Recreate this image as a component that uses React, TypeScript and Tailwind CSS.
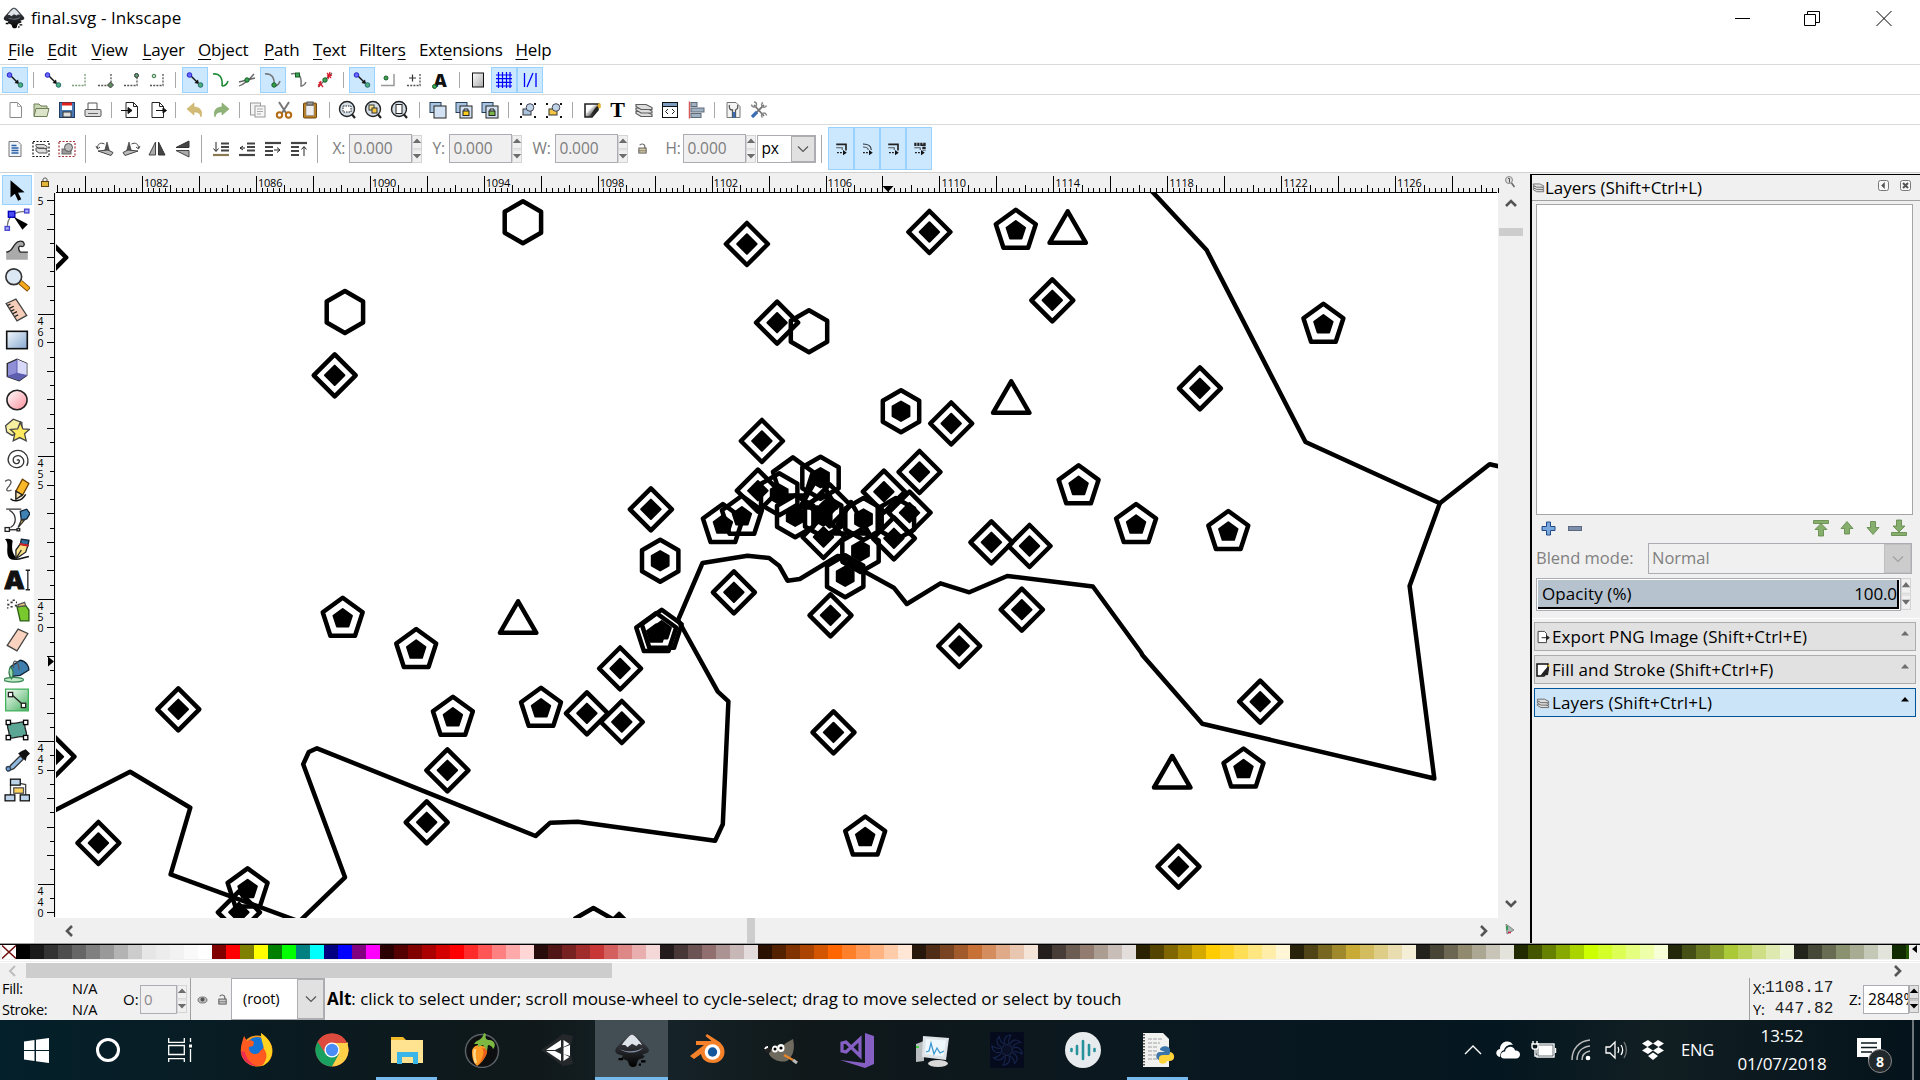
import React from "react";

type Kids = { children?: React.ReactNode };
type Pt = [number, number];

/* ---------- small building blocks ---------- */

const Ic = ({ children, s = 20 }: Kids & { s?: number }) => (
  <svg width={s} height={s} viewBox="0 0 20 20" fill="none" stroke="#333" strokeWidth="1" className="shrink-0">
    {children}
  </svg>
);

const Btn = ({ children, on, tall }: Kids & { on?: boolean; tall?: boolean }) => (
  <div
    className={
      "flex w-[26px] shrink-0 items-center justify-center border " +
      (tall ? "h-[43px] " : "h-[26px] ") +
      (on ? "border-[#99d1ff] bg-[#cce8ff]" : "border-transparent")
    }
  >
    {children}
  </div>
);

const Sep = ({ tall }: { tall?: boolean }) => (
  <div className="flex w-[11.8px] shrink-0 justify-center">
    <div className={"w-px bg-[#a8a8a8] " + (tall ? "h-7" : "h-4")} />
  </div>
);

const Spin = ({ dark, h = 28 }: { dark?: boolean; h?: number }) => (
  <svg width="10" height={h} viewBox="0 0 10 28" preserveAspectRatio="none" className="shrink-0">
    <rect x="0.5" y="0.5" width="9" height="27" fill={dark ? "#e1e1e1" : "#f0f0f0"} stroke={dark ? "#adadad" : "#d4d4d4"} />
    <path d="M0 13.500h10M0 15h10" stroke={dark ? "#adadad" : "#d9d9d9"} />
    <path d="M0.800 8h8.400L5 3.500zM0.800 19h8.400L5 23.500z" fill={dark ? "#000" : "#6d6d6d"} />
  </svg>
);

const Field = ({ children, w }: Kids & { w: string }) => (
  <div className="flex items-center">
    <div className={"flex h-[29px] items-center border border-[#abadb3] bg-[#f0f0f0] pl-[3px] text-[15.5px] tracking-[-0.1px] text-[#7d7d7d] " + w}>
      {children}
    </div>
    <Spin />
  </div>
);

const Chev = ({ d, c = "#555", w = 2.6 }: { d: string; c?: string; w?: number }) => (
  <svg width="12" height="12" viewBox="0 0 12 12" fill="none" stroke={c} strokeWidth={w}>
    <path d={d} />
  </svg>
);

/* ---------- snap bar icons ---------- */

const SnapMain = () => (
  <Ic>
    <path d="M6 6l7 7" stroke="#111" strokeWidth="1.4" />
    <path d="M14 14l-4.500-1 3.500-3.500z" fill="#111" stroke="none" />
    <circle cx="4.500" cy="5" r="2.300" fill="#6a6aff" stroke="#2323c8" />
    <circle cx="15.500" cy="15" r="2.300" fill="#4fae7c" stroke="#1f6f6f" />
  </Ic>
);
const SnapBox = ({ k }: { k: number }) => (
  <Ic>
    <path d="M3 15.500h13V3" stroke={k === 0 ? "#7a9a7a" : "#555"} strokeWidth="1.300" strokeDasharray="2 1.200" />
    {k === 1 && <path d="M15.500 12l3 3-3 3-3-3z" fill="#5e8a62" stroke="#444" />}
    {k === 2 && <circle cx="15.500" cy="5.500" r="2" fill="#5e9e72" />}
    {k === 3 && <circle cx="7" cy="6" r="1.800" fill="#bfe0c2" stroke="#3d7a4c" />}
  </Ic>
);
const Curve = ({ c, dot }: { c: string; dot?: Pt }) => (
  <Ic>
    <path d="M2 4c6-1 10 3 9 12M11 16c3 0 5-2 6-5" stroke={c} strokeWidth="1.600" />
    {dot && <circle cx={dot[0]} cy={dot[1]} r="2.200" fill="#35a04c" stroke="#145c24" />}
  </Ic>
);
const snapBar: React.ReactNode[] = [
  <Btn on><SnapMain /></Btn>, <Sep />,
  <Btn><SnapMain /></Btn>, <Btn><SnapBox k={0} /></Btn>, <Btn><SnapBox k={1} /></Btn>, <Btn><SnapBox k={2} /></Btn>, <Btn><SnapBox k={3} /></Btn>, <Sep />,
  <Btn on><SnapMain /></Btn>,
  <Btn><Curve c="#1d8a35" /></Btn>,
  <Btn><Ic><path d="M2 16C8 14 12 10 17 4M2 12l16-4" stroke="#666" strokeWidth="1.300" /><circle cx="10" cy="10" r="2.200" fill="#3aa655" stroke="#145c24" /></Ic></Btn>,
  <Btn on><Curve c="#777" dot={[11, 15]} /></Btn>,
  <Btn><Ic><path d="M2 4c3-1 6 0 8 1 3 3 2 7 2 11 2 0 4-2 5-4" stroke="#777" strokeWidth="1.500" /><rect x="6.500" y="3" width="4" height="4" fill="#3aa655" stroke="#145c24" /></Ic></Btn>,
  <Btn><Ic><path d="M3 17L17 3" stroke="#666" strokeWidth="1.300" /><path d="M4 12l4 5M3 15l4-1M12 3l4 5M12 6l5-1M4 17l2-6M13 9l2-7" stroke="#d81e2c" strokeWidth="1.300" /><circle cx="10" cy="10" r="2.200" fill="#3aa655" stroke="#145c24" /></Ic></Btn>,
  <Sep />,
  <Btn on><SnapMain /></Btn>,
  <Btn><Ic><path d="M3 15.500h13V4" stroke="#999" strokeWidth="1.500" /><circle cx="8" cy="8" r="2" fill="#3aa655" stroke="#145c24" /></Ic></Btn>,
  <Btn><Ic><path d="M3 15.500h13V4" stroke="#555" strokeWidth="1.300" strokeDasharray="2 1.200" /><path d="M5 8h7M8.500 4.500v7" stroke="#333" strokeWidth="1.200" /></Ic></Btn>,
  <Btn><span className="relative text-[18px] leading-none font-extrabold text-[#111]">A<i className="absolute bottom-0 left-[-2px] size-[5px] rounded-full border border-[#145c24] bg-[#3aa655]" /></span></Btn>,
  <Sep />,
  <Btn><Ic><defs><linearGradient id="pg" x1="0" y1="0" x2="1" y2="1"><stop offset="0" stopColor="#fff" /><stop offset="1" stopColor="#aaa" /></linearGradient></defs><rect x="4.500" y="3" width="11" height="14" fill="url(#pg)" stroke="#111" /></Ic></Btn>,
  <Btn on><Ic><path d="M4.500 2v16M8.500 2v16M12.500 2v16M16 2v16M2 5h16M2 8.700h16M2 12.400h16M2 16h16" stroke="#00f" strokeWidth="1.200" /></Ic></Btn>,
  <Btn on><Ic><path d="M4.500 3v14M16 3v14M7 17L13 3" stroke="#00f" strokeWidth="1.300" /></Ic></Btn>,
];

/* ---------- command bar icons ---------- */

const Page = ({ arrow }: { arrow?: "in" | "out" }) => (
  <Ic>
    <path d="M5 2.500h7.500l4 4v11H5z" fill="#fff" stroke={arrow ? "#222" : "#8a8a8a"} />
    <path d="M12.500 2.500v4h4" stroke={arrow ? "#222" : "#aaa"} />
    {arrow === "in" && <path d="M0 10.500h9M7 7.500l4 3-4 3z" fill="#111" stroke="#111" />}
    {arrow === "out" && <path d="M9 10.500h8M16 8l3.500 2.500-3.500 2.500z" fill="#111" stroke="#111" />}
  </Ic>
);
const Mag = ({ k }: { k: number }) => (
  <Ic>
    <circle cx="9" cy="9" r="7.500" fill="#d5dfe8" stroke="#222" strokeWidth="1.400" />
    <path d="M14 14.500l3 3.500" stroke="#222" strokeWidth="2.200" />
    {k === 0 && <rect x="5" y="6" width="8" height="6" fill="#fff" stroke="#222" strokeDasharray="1.500 1" />}
    {k === 1 && <><rect x="5" y="5" width="5" height="5" fill="#ffe68a" stroke="#333" /><rect x="8" y="8" width="5" height="5" fill="#f5c542" stroke="#333" /></>}
    {k === 2 && <rect x="6" y="4.500" width="6" height="9" fill="#fff" stroke="#222" />}
  </Ic>
);
const Dup = ({ k }: { k: number }) => (
  <Ic>
    <rect x="2" y="2.500" width="11" height="10" fill="#a8c4e0" stroke="#27405c" />
    <rect x="6" y="6" width="12" height="12" fill="#d3e2f2" stroke="#222" />
    {k > 0 && <><rect x="9" y="11" width="6" height="4.500" fill={k === 1 ? "#ffce1f" : "#7bb54a"} stroke="#222" /><path d="M10 11V9h4v2" stroke="#222" /></>}
  </Ic>
);
const Grp = ({ lock }: { lock?: boolean }) => (
  <Ic>
    <path d="M2 4h2M16 4h2M2 17h2M16 17h2M3 3v2M17 3v2M3 16v2M17 16v2" stroke="#111" strokeWidth="2" />
    <rect x="5" y="9" width="8" height="6" fill={lock ? "#f5c542" : "#a9c4de"} stroke="#333" />
    <circle cx="12" cy="7.500" r="3.800" fill="#bfd3e6" stroke="#445" />
  </Ic>
);
const Brush = () => (
  <Ic>
    <defs><linearGradient id="fs" x1="0" y1="0" x2="1" y2="1"><stop offset="0.350" stopColor="#fff" /><stop offset="0.800" stopColor="#222" /></linearGradient></defs>
    <path d="M3 4h13v6l-6 7H3z" fill="url(#fs)" stroke="#222" strokeWidth="1.600" />
    <path d="M17.500 3l-5 6-5 8 6-5 5-7z" fill="#222" stroke="none" />
    <path d="M15 5.500l3-3 1 5-2 1z" fill="#eab52c" stroke="none" />
  </Ic>
);
const LayersIc = ({ s }: { s?: number }) => (
  <Ic s={s}>
    {[11, 7.5, 4].map((y) => (
      <path key={y} d={`M2 ${y + 0.5}h10l6 3v2H7l-5-3z`} fill="#dedede" stroke="#5c5c5c" strokeWidth="1.200" />
    ))}
  </Ic>
);
const Undo = ({ flip, c }: { flip?: boolean; c: string }) => (
  <Ic>
    <g transform={flip ? "translate(20 0) scale(-1 1)" : undefined}>
      <path d="M2 9l7-6v4c6 0 9 4 7 10-1-4-3-5-7-5v3z" fill={c} stroke={c} strokeOpacity=".5" fillOpacity=".75" />
    </g>
  </Ic>
);
const cmdBar: React.ReactNode[] = [
  <Btn><Page /></Btn>,
  <Btn><Ic><path d="M3 16V4h5l2 2h6v3" fill="#c9d6b4" stroke="#6d7d55" /><path d="M3 16.500l2-8h13l-2 8z" fill="#dbe4c8" stroke="#6d7d55" /></Ic></Btn>,
  <Btn><Ic><rect x="2.500" y="2.500" width="15" height="15" fill="#4a78b0" stroke="#1e3c66" /><rect x="5" y="3" width="10" height="7" fill="#fff" stroke="none" /><rect x="5" y="2.500" width="10" height="3" fill="#e0201b" stroke="none" /><rect x="6" y="12" width="8" height="5" fill="#ddd" stroke="#333" /></Ic></Btn>,
  <Btn><Ic><path d="M5 9V3h9v6" fill="#fff" stroke="#555" /><rect x="2" y="9.500" width="16" height="7" rx="1" fill="#ddd" stroke="#555" /><path d="M5 13.500h10" stroke="#666" /></Ic></Btn>,
  <Sep />, <Btn><Page arrow="in" /></Btn>, <Btn><Page arrow="out" /></Btn>, <Sep />,
  <Btn><Undo c="#c2a44a" /></Btn>, <Btn><Undo flip c="#6b9a4c" /></Btn>, <Sep />,
  <Btn><Ic><rect x="2.500" y="3" width="10" height="12" fill="#f4f4f4" stroke="#999" /><rect x="7" y="6" width="10" height="11" fill="#f6f6f6" stroke="#999" /><path d="M9 9h6M9 11.500h6M9 14h4" stroke="#aaa" /></Ic></Btn>,
  <Btn><Ic><path d="M5 2l7 11M15 2L8 13" stroke="#777" strokeWidth="2" /><circle cx="5.500" cy="15" r="2.700" stroke="#b36b12" strokeWidth="2" /><circle cx="14.500" cy="15" r="2.700" stroke="#b36b12" strokeWidth="2" /></Ic></Btn>,
  <Btn><Ic><rect x="3.500" y="3" width="13" height="15" rx="1" fill="#b97f22" stroke="#6b4510" /><rect x="6" y="5.500" width="8" height="10" fill="#eee" stroke="#888" strokeWidth=".6" /><rect x="7" y="2" width="6" height="3" fill="#999" stroke="#555" /></Ic></Btn>,
  <Sep />, <Btn><Mag k={0} /></Btn>, <Btn><Mag k={1} /></Btn>, <Btn><Mag k={2} /></Btn>, <Sep />,
  <Btn><Dup k={0} /></Btn>, <Btn><Dup k={1} /></Btn>, <Btn><Dup k={2} /></Btn>, <Sep />,
  <Btn><Grp /></Btn>, <Btn><Grp lock /></Btn>, <Sep />,
  <Btn><Brush /></Btn>,
  <Btn><span className="font-['Liberation_Serif'] text-[22px] leading-none font-bold text-black">T</span></Btn>,
  <Btn><LayersIc /></Btn>,
  <Btn><Ic><rect x="2.500" y="2.500" width="15" height="15" fill="#fff" stroke="#111" /><path d="M3 4.500h14" stroke="#7d9cc0" strokeWidth="3" /><path d="M2.500 6.500h15" stroke="#111" /><path d="M8 9l-2.500 2.500L8 14M12 9l2.500 2.500L12 14" stroke="#222" /></Ic></Btn>,
  <Btn><Ic><path d="M3.500 1.500v17" stroke="#d65a5a" strokeWidth="1.500" /><rect x="5" y="2.500" width="6" height="4" fill="#9fb1c2" stroke="#5d6b78" /><rect x="5" y="8" width="13" height="4" fill="#9fb1c2" stroke="#5d6b78" /><rect x="5" y="13.500" width="10" height="4" fill="#9fb1c2" stroke="#5d6b78" /></Ic></Btn>,
  <Sep />,
  <Btn><Ic><path d="M4 2.500h9l4 4v11H4z" fill="#f4f4f4" stroke="#777" /><path d="M6.500 5c-1 4 1 5 3 5v7h3v-7c2-1 3-2 2-5" stroke="#555" strokeWidth="1.300" /><path d="M11 12v6" stroke="#3c6eb4" strokeWidth="2.500" /></Ic></Btn>,
  <Btn><Ic><path d="M5 5l10 11M15 5L4 16" stroke="#777" strokeWidth="1.800" /><path d="M2.500 4.500A2.500 2.500 0 1 0 5 2M14 2.500a2.500 2.500 0 1 0 3.500 3M13.500 17.500a2.500 2.500 0 1 1 4-2" stroke="#888" strokeWidth="1.400" /><path d="M3 17l5-5" stroke="#3c6eb4" strokeWidth="3.200" /></Ic></Btn>,
];

/* ---------- tool-control icons ---------- */

const Rot = ({ flip }: { flip?: boolean }) => (
  <Ic>
    <g transform={flip ? "translate(20 0) scale(-1 1)" : undefined}>
      <path d="M9 14l3-11 3 11z" fill="#555" stroke="#333" strokeWidth=".6" />
      <path d="M3 12l13 4.500 2-3-5-2.500z" fill="#bbb" stroke="#444" />
      <path d="M2.500 9c0-4 3-6 7-4M1 7l1.500 3L5 8" stroke="#444" />
    </g>
  </Ic>
);
const FlipIc = ({ v }: { v?: boolean }) => (
  <Ic>
    <g transform={v ? "rotate(-90 10 10)" : undefined}>
      <path d="M8.500 3v13H2z" fill="#aaa" stroke="#444" />
      <path d="M11.500 3v13H18z" fill="#444" stroke="#333" />
    </g>
  </Ic>
);
const Ord = ({ k }: { k: number }) => (
  <Ic>
    {k < 2 ? (
      <>
        <path d="M10 4.500h8M10 8h8M10 11.500h8" stroke="#444" strokeWidth="2.200" />
        <path d="M2 16h16" stroke={k ? "#444" : "#8a7a52"} strokeWidth="2.200" />
        <path d={k ? "M3 9h5M6 7L3 9l3 2" : "M5 3v9M2.500 9.500L5 12.500 7.500 9.500"} stroke="#222" />
      </>
    ) : (
      <>
        <path d="M2 4h16" stroke="#444" strokeWidth="2.200" />
        <path d="M2 8h8M2 12h8M2 16h8" stroke="#444" strokeWidth="2.200" />
        <path d={k === 2 ? "M11 11h6M14 8.500l3 2.500-3 2.500" : "M15 17V8M12.500 10.500L15 7.500l2.500 3"} stroke="#222" />
      </>
    )}
  </Ic>
);
const Aff = ({ k }: { k: number }) => (
  <Ic s={15}>
    <path d={k === 1 ? "M4 4c7 0 11 2 11 8" : "M3 4.500h13v8"} stroke="#222" strokeWidth={k === 3 ? 4.5 : k === 1 ? 1.4 : 2.2} strokeDasharray={k === 3 ? "3 1" : undefined} />
    <path d={k === 1 ? "M4 8c4 0 7 1 7 4" : "M3 9h8v3"} stroke="#555" strokeWidth="1.400" />
    <path d="M4 15.500h9" stroke="#222" strokeWidth="1.400" strokeDasharray="2.500 1.500" />
    <path d="M12 12l5 3.500-5 3.500z" fill="#111" stroke="none" />
  </Ic>
);
const ctlIcons: React.ReactNode[] = [
  <Btn><Ic><path d="M4 2.500h9l3 3v12H4z" fill="#eef3f9" stroke="#777" /><path d="M6.500 6.500h5M6.500 9h7M6.500 11.500h7M6.500 14h7" stroke="#2a5fa8" strokeWidth="1.300" /></Ic></Btn>,
  <Btn><Ic><rect x="2" y="2.500" width="16" height="15" stroke="#111" strokeWidth="1.200" strokeDasharray="2 1.500" /><path d="M5 5.500h8l3 2v2H8l-3-2zM5 9h8l3 2v3H8l-3-2z" fill="#ddd" stroke="#555" /></Ic></Btn>,
  <Btn><Ic><rect x="2" y="2.500" width="16" height="15" stroke="#a3323b" strokeWidth="1.200" strokeDasharray="2 1.500" /><rect x="5" y="10" width="9" height="5" fill="#999" stroke="#666" /><circle cx="11.500" cy="8.500" r="4" fill="#bbb" stroke="#555" /></Ic></Btn>,
  <Sep tall />, <Btn><Rot /></Btn>, <Btn><Rot flip /></Btn>, <Btn><FlipIc /></Btn>, <Btn><FlipIc v /></Btn>, <Sep tall />,
  <Btn><Ord k={0} /></Btn>, <Btn><Ord k={1} /></Btn>, <Btn><Ord k={2} /></Btn>, <Btn><Ord k={3} /></Btn>, <Sep tall />,
];

const Pad = ({ c = "#e3b63a", s = 12 }: { c?: string; s?: number }) => (
  <svg width={s} height={s} viewBox="0 0 12 12">
    <path d="M3 2.500c1-2 5-2 5.500 1V6" fill="none" stroke="#666" strokeWidth="1.300" />
    <rect x="2" y="5.500" width="8" height="5.500" fill={c} stroke="#555" />
    <path d="M2 8.500h8" stroke="#555" strokeWidth=".7" />
  </svg>
);

/* ---------- toolbox ---------- */

const T = ({ children }: Kids) => (
  <svg width="26" height="26" viewBox="0 0 24 24" fill="none" stroke="#222" strokeWidth="1.200">{children}</svg>
);
const tools: React.ReactNode[] = [
  <T><path d="M6 3l13 11-6 .5 3 6-3 1.500-3-6.500L6 19z" fill="#000" stroke="none" /></T>,
  <T><path d="M3 20C3 9 8 4 21 4" stroke="#777" /><rect x="4" y="4" width="6" height="5.500" fill="#4a4af0" stroke="#00b" /><rect x="19" y="2" width="4" height="3.500" fill="#aaf" stroke="#44c" /><rect x="1" y="18" width="4" height="3.500" fill="#aaf" stroke="#44c" /><path d="M9 9l13 7-5 5z" fill="#000" stroke="none" /></T>,
  <T><path d="M2 21v-7c7 0 6-9 12-10 5 0 6 4 3 5-3-2-5 1-2 5h7v7z" fill="#aaa" stroke="none" /><path d="M2 14c7 0 6-9 12-10 5-1 6 4 3 5M17 9c-3-2-5 1-2 5h7" /></T>,
  <T><path d="M15 14l8 7" stroke="#7a4a00" strokeWidth="5" /><path d="M15 14l7.500 6.500" stroke="#f7a91c" strokeWidth="3.400" /><circle cx="9" cy="9" r="7.300" fill="#dce8f4" stroke="#333" strokeWidth="1.500" /></T>,
  <T><path d="M2 6l9-4 10 15-9 5z" fill="#f5cdb8" stroke="#444" /><path d="M3 8l3-1.500M5 10.500l4-2M6.500 13l3-1.500M8 15.500l4-2M10 18l3-1.500" /></T>,
  <T><defs><linearGradient id="tb" x1="0" y1="0" x2="1" y2="1"><stop offset="0" stopColor="#f4f8fc" /><stop offset="1" stopColor="#86a9d0" /></linearGradient></defs><rect x="2.500" y="4" width="19" height="16" fill="url(#tb)" stroke="#111" strokeWidth="1.500" /></T>,
  <T><path d="M3 6l9-4 9 4v11l-7 5-11-4z" fill="#8f8fd8" stroke="#222" /><path d="M12 2l9 4v11l-9-2z" fill="#d8d8f8" stroke="none" /><path d="M3 18l9-3 9 2-7 5z" fill="#5f5fb0" stroke="none" /><path d="M12 2v13l-9 3M12 15l9 2" stroke="#55a" strokeWidth=".8" /></T>,
  <T><defs><linearGradient id="te" x1="0" y1="0" x2="1" y2="1"><stop offset="0" stopColor="#fff" /><stop offset="1" stopColor="#ff8f9c" /></linearGradient></defs><ellipse cx="12" cy="12" rx="9.300" ry="9" fill="url(#te)" stroke="#222" strokeWidth="1.400" /></T>,
  <T><path d="M1.500 8l7-6 8 3 0 8-9 4-5-3z" fill="#f7f0a0" stroke="#444" /><path d="M15 5l2.500 6 6 .5-4.500 4 1.500 6.500-6-3-6 3 1.500-6.500-4-4 6.500-.5z" fill="#ffe95e" stroke="#444" /></T>,
  <T><path d="M12 12.500c.5-1.500 3-.5 2 1.500-1.500 2.500-5.500 1.500-5.500-2 0-4 5.500-5.500 8.500-2 3 4 0 9.500-5.500 9C5 18.500 2.500 13 4.500 8.500 7 3 14 1.500 18.500 5c4 3 4.500 8.500 2.500 12.500" stroke="#333" strokeWidth="1.200" /></T>,
  <T><path d="M1 4c5-3 7 0 4 4-4 4-3 6 2 4" stroke="#555" /><path d="M6 20c3 3 10 3 14-4" stroke="#111" strokeWidth="1.300" /><path d="M11 13l6-11 6 4-6 11-6 3z" fill="#fbb829" stroke="#6b4300" /><path d="M11 13l6 3.500-6 4z" fill="#fbe3b0" stroke="#222" /></T>,
  <T><path d="M2 2h14M5 3c7 4 7 12 1 16" stroke="#333" /><rect x="1" y="19" width="4" height="3.500" fill="#fff" /><path d="M5 21h8" /><rect x="12" y="20" width="2.500" height="2" fill="#fff" /><path d="M15 4l6-2 3 4-3 5-5 1z" fill="#3f82b4" stroke="#123" /><path d="M16 12l-3 7 6-7z" fill="#fbc040" stroke="#333" /></T>,
  <T><path d="M1 2c3-1 7 0 7 2-1 5-1 11 4 16-6 3-9-1-9-7 0-4 1-8-2-11z" fill="#000" stroke="none" /><path d="M9 20c4 2 7-1 14-2" stroke="#111" strokeWidth="1.600" /><path d="M16 2l7 1-1 5-7-1z" fill="#2f6ca0" stroke="#123" /><path d="M15 6.500l7 1.500-2 6-9 6 0-8z" fill="#fbe08a" stroke="#222" /><path d="M14.500 6.500l8 1.500" stroke="#c22" strokeWidth="2" /><path d="M11 20l5-8" /></T>,
  <T><path d="M20 3h4M22 3v18M20 21h4" stroke="#222" /><text x="0.500" y="20" fontSize="22" fontWeight="800" fill="#111" stroke="#111" strokeWidth=".8" fontFamily="Open Sans" textLength="18" lengthAdjust="spacingAndGlyphs">A</text></T>,
  <T><path d="M3 3h1M6 5h2M3 7h2M8 3h2M11 5h1M6 9h2M10 8h2M3 10h1" stroke="#333" strokeWidth="1.600" /><path d="M12 9l8-1 3 4v10h-8z" fill="#79c82e" stroke="#2a5a10" /><path d="M13 7l6-2 1 3-7 1z" fill="#f2cf7a" stroke="#555" /></T>,
  <T><path d="M3 17L13 2l9 4-10 16z" fill="#f9d3bf" stroke="#444" /></T>,
  <T><ellipse cx="9" cy="21" rx="9" ry="2.200" fill="#bfe8c4" stroke="#3b8a57" /><path d="M6 9l9-6c6 1 8 6 8 9l-8 5-9 1z" fill="#3f7fae" stroke="#123" /><path d="M6 9c-2 3-2 8 1 11 2-3 2-8-1-11z" fill="#9ed8ae" stroke="#2f7a4a" /><path d="M9 10c-2-8 4-9 5 2" stroke="#555" /></T>,
  <T><defs><linearGradient id="tg" x1="0" y1="0" x2="1" y2="1"><stop offset="0" stopColor="#fff" /><stop offset="1" stopColor="#43b05c" /></linearGradient></defs><rect x="1.500" y="2" width="21" height="20" fill="url(#tg)" stroke="#43b05c" /><path d="M7 7l10 9" stroke="#222" /><rect x="4" y="5" width="4" height="4" fill="#fff" /><rect x="16" y="15" width="4" height="4" fill="#fff" /></T>,
  <T><path d="M4 5c6 3 12-2 16 0-3 5 3 9 0 14-6-3-11 2-16 0 3-5-3-9 0-14z" fill="#5ba695" stroke="#222" />{([[2, 3], [18, 3], [2, 17], [18, 17]] as Pt[]).map(([x, y], i) => <rect key={i} x={x} y={y} width="4" height="4" fill="#fff" stroke="#000" />)}</T>,
  <T><path d="M15 8l-9 9-2 5 5-2 9-9z" fill="#8fb8e0" stroke="#333" /><path d="M13 6l7 7 1-4 3-3-4-4-4 2z" fill="#111" stroke="none" /><circle cx="4" cy="20" r="2" fill="#6aa0d8" stroke="#345" /></T>,
  <T><path d="M6 7v10M10 5l10 2v10" stroke="#444" /><rect x="6" y="2" width="9" height="5.500" fill="#bcd3ea" stroke="#111" /><rect x="9" y="10" width="9" height="5" fill="#ffd35c" stroke="#555" /><rect x="1" y="16.500" width="9" height="5.500" fill="#bcd3ea" stroke="#111" /><rect x="15" y="16.500" width="8.500" height="5.500" fill="#bcd3ea" stroke="#111" /></T>,
];

/* ---------- rulers ---------- */

const UNIT = 28.48;

const HRuler = () => {
  const ticks: React.ReactNode[] = [];
  for (let i = -20; i <= 240; i++) {
    const x = Math.round(142 + (i * UNIT) / 5 - 34);
    if (x < 22 || x > 1464) continue;
    const y = i % 10 === 0 ? 3 : i % 5 === 0 ? 12 : 15;
    ticks.push(<path key={i} d={`M${x + 0.5} ${y}V20`} />);
  }
  return (
    <svg width="1465" height="20" className="block">
      <g stroke="#000">{ticks}<path d="M22 19.500H1463" strokeWidth="1" /></g>
      <g fill="#000" fontSize="11" letterSpacing="-0.200">
        {Array.from({ length: 12 }, (_, i) => (
          <text key={i} x={110 + i * 4 * UNIT} y="14">{1082 + i * 4}</text>
        ))}
      </g>
      <path d="M848.500 13h11l-5.500 6z" />
      <g transform="translate(6 4)"><rect x="1.500" y="4.500" width="7" height="5" fill="#e3b63a" stroke="#5a4310" /><path d="M3 4.500V2.500c0-2 4-2 4 0v2" fill="none" stroke="#444" /></g>
    </svg>
  );
};

const VRuler = () => {
  const ticks: React.ReactNode[] = [];
  for (let i = -8; i <= 42; i++) {
    const y = Math.round(314 + (i * UNIT) / 2 - 193);
    if (y < 4 || y > 722) continue;
    const x = i % 10 === 0 ? 4 : i % 2 === 0 ? 13 : 16;
    ticks.push(<path key={i} d={`M${x} ${y + 0.5}H20`} />);
  }
  return (
    <svg width="22" height="725" className="block shrink-0">
      <g stroke="#000">{ticks}<path d="M20.500 0V724" /></g>
      <g fill="#000" fontSize="10.500">
        {[465, 460, 455, 450, 445, 440].map((v, i) =>
          String(v).split("").map((ch, j) => {
            const y = -10.5 + i * 5 * UNIT + j * 11;
            return y > 4 ? <text key={i + "-" + j} x="3.500" y={y}>{ch}</text> : null;
          })
        )}
      </g>
      <path d="M14 463.500v10l6-5z" />
    </svg>
  );
};

/* ---------- drawing ---------- */

const poly = (n: number, r: number) =>
  Array.from({ length: n }, (_, i) => {
    const a = -Math.PI / 2 + (i * 2 * Math.PI) / n;
    return `${(r * Math.cos(a)).toFixed(2)},${(r * Math.sin(a)).toFixed(2)}`;
  }).join(" ");

const Marks = ({ n, at, dot }: { n: number; at: Pt[]; dot?: boolean }) => (
  <>
    {at.map(([x, y], i) => (
      <g key={i} transform={`translate(${x + 0.4} ${y})`}>
        <polygon points={poly(n, 21)} />
        {dot && <polygon points={poly(n, 9.7)} fill="#000" strokeWidth="2" />}
      </g>
    ))}
  </>
);

const diamonds: Pt[] = [
  [746.7, 244], [929.2, 232], [776.9, 322.7], [334.5, 375.3], [761.7, 441], [1052.1, 300.3], [1199.7, 388.3], [951, 423.5],
  [991.2, 542.3], [1029.3, 546], [1021.6, 609.7], [959, 646], [1260, 701.7], [178.1, 709.3], [53.2, 756.7], [98.2, 843],
  [619.9, 668.5], [586.7, 713.3], [621.6, 722], [447.2, 770.3], [426.5, 822.3], [238.7, 912.3], [733.7, 592.3], [618.9, 935],
  [45, 257.5], [650.7, 509.3], [757.7, 490.7], [919.3, 472], [883.7, 491.7], [909.3, 512.7], [893.7, 538.3], [823.3, 537],
  [830.3, 615.3], [829.5, 505.3], [833.3, 732.4], [1178.3, 866.6],
];
const hexDots: Pt[] = [[900.8, 411.3], [660, 560.7], [820.3, 477.7], [779, 494.3], [795, 516.3], [863.3, 519], [860.3, 551], [845, 576.3], [823, 516]];
const hexes: Pt[] = [[522.7, 222.3], [344.7, 312], [808.8, 331.3], [895.7, 519], [593.2, 929]];
const pentDots: Pt[] = [
  [1015.6, 230.7], [1323.2, 324.7], [1078.4, 486.3], [1135.9, 525], [1228.1, 532], [342.5, 618.7], [416, 650], [452.7, 717.7],
  [540.8, 708.7], [247.4, 889.4], [661.5, 630.7], [656, 634], [722.7, 525], [741.7, 516.7], [865, 837.5], [1243.3, 769.5],
];
const pents: Pt[] = [[792.7, 478.4]];
const tris: Pt[] = [[1067.5, 232.3], [1011, 402.3], [517.9, 622.3], [1172, 777], [850.7, 523], [818, 497]];

const Canvas = () => (
  <svg width="1442" height="725" viewBox="56.200 193 1442 725" className="block shrink-0 bg-white">
    <g fill="none" stroke="#000" strokeWidth="4.500" strokeLinejoin="round">
      <Marks n={4} at={diamonds} dot />
      <Marks n={6} at={hexDots} dot />
      <Marks n={6} at={hexes} />
      <Marks n={5} at={pentDots} dot />
      <Marks n={5} at={pents} />
      <Marks n={3} at={tris} />
      <path d="M1150 189L1206.800 250 1305.700 442 1440 503.300 1489.800 464.300 1502 467" />
      <path d="M1440 503.300L1409.800 586 1434.500 778.500 1202.500 723.700 1142.500 655 1141.300 652.500 1093.100 586.500 1007.500 576 969.500 592.300 940.700 583.300 907 604 894 587.700 866.700 572.700 846.700 556.700 838 556 800 579 787.700 580.700 779.300 565.700 769.300 558 747.700 555.700 702.700 563 678.300 620 718 691.700 728.600 701.300 723 824.300 715.300 840.700 578 821.700 550.500 822.700 535.800 836 317.200 748.300 309 752 303.400 764.300 345.200 877.300 300 921" />
      <path d="M50 813L130.300 771.700 190.500 807.700 170.800 874.300 298 921" />
      <path d="M843 560L864 571" strokeWidth="8" />
    </g>
  </svg>
);

/* ---------- palette ---------- */

const swatches = (
  "000000 1a1a1a 333333 4d4d4d 666666 808080 999999 b3b3b3 cccccc e6e6e6 ececec f2f2f2 f9f9f9 ffffff " +
  "800000 ff0000 808000 ffff00 008000 00ff00 008080 00ffff 000080 0000ff 800080 ff00ff " +
  "2b0000 550000 800000 aa0000 d40000 ff0000 ff2a2a ff5555 ff8080 ffaaaa ffd5d5 " +
  "280b0b 501616 782121 a02c2c c83737 d35f5f de8787 e9afaf f4d7d7 241c1c 483737 6c5353 916f6f ac9393 c8b7b7 e3dbdb " +
  "2b1100 552200 803300 aa4400 d45500 ff6600 ff7f2a ff9955 ffb380 ffccaa ffe6d5 " +
  "28170b 502d16 784421 a05a2c c87137 d38d5f deaa87 e9c6af f4e3d7 241f1c 483e37 6c5d53 917c6f ac9d93 c8beb7 e3dedb " +
  "2b2200 554400 806600 aa8800 d4aa00 ffcc00 ffd42a ffdd55 ffe680 ffeeaa fff6d5 " +
  "28220b 504416 786721 a0892c c8ab37 d3bc5f decd87 e9ddaf f4eed7 24221c 484537 6c6753 918a6f aca793 c8c4b7 e3e2db " +
  "222b00 445500 668000 88aa00 aad400 ccff00 d4ff2a ddff55 e5ff80 eeffaa f6ffd5 " +
  "23280b 445016 677821 89a02c abc837 bcd35f cdde87 dde9af eef4d7 22241c 454837 676c53 8a916f a7ac93 c4c8b7 e2e3db 112b00 225500"
).split(" ");

const Palette = () => (
  <div className="h-5 shrink-0 border-t border-[#a0a0a0] bg-[#f0f0f0]">
    <div className="flex h-[15px] border-t border-black">
      <div className="flex w-[1909px] shrink-0 overflow-hidden pl-[2px]">
        <svg width="14" height="14" viewBox="0 0 14 14" className="shrink-0 bg-white"><path d="M0 0.500l14 13M14 0.500L0 13.500" stroke="#701010" strokeWidth="1.500" /></svg>
        {swatches.map((c, i) => (
          <div key={i} className="h-full w-[14px] shrink-0" style={{ backgroundColor: "#" + c }} />
        ))}
      </div>
      <svg width="5" height="8" className="ml-[3px]"><path d="M5 0v8L0 4z" /></svg>
    </div>
    <div className="mt-px h-px bg-white" />
    <div className="mt-px h-px bg-white" />
  </div>
);

/* ---------- dock ---------- */

const dockArrow = (d: string) => (
  <svg width="18" height="18" viewBox="0 0 18 18"><path d={d} fill="#86ae6c" stroke="#5c8442" strokeWidth=".8" /></svg>
);

const DockBar = ({ icon, label, on }: { icon: React.ReactNode; label: string; on?: boolean }) => (
  <div className={"mb-1 flex h-[29px] items-center border pl-px text-[17px] " + (on ? "border-[#005499] bg-[#cce4f7]" : "border-[#adadad] bg-[#e1e1e1]")}>
    {icon}
    <span className="flex-1 pl-[2px] leading-none tracking-[0.1px]">{label}</span>
    <svg width="8" height="5" className="mr-[6px] mb-[6px]"><path d="M0 4.500h8L4 0z" fill={on ? "#000" : "#6d6d6d"} /></svg>
  </div>
);

const Dock = () => (
  <div className="mt-px flex w-[390px] shrink-0 flex-col border-t border-l-2 border-black">
    <div className="flex h-[26px] items-center border-b border-[#a0a0a0] text-[17px]">
      <LayersIc s={13} />
      <span className="flex-1 tracking-[-0.05px]">Layers (Shift+Ctrl+L)</span>
      <div className="mr-[9px] mb-1 flex gap-[11px]">
        {["M6.500 2.500v6L3.500 5.500z", "M3 3l5 5M8 3l-5 5"].map((d, i) => (
          <svg key={i} width="11" height="11"><rect x=".5" y=".5" width="10" height="10" rx="2" fill="#f8f8f8" stroke="#777" /><path d={d} fill="#555" stroke="#555" strokeWidth={i ? 2 : 0.5} /></svg>
        ))}
      </div>
    </div>
    <div className="mx-1 mr-[7px] mt-[3px] h-[311px] border border-[#a5a5a5] bg-white" />
    <div className="flex h-[27px] items-center pr-[12px] pb-px pl-[9px]">
      <svg width="15" height="15"><path d="M5.500 1h4v4.500H14v4H9.500V14h-4V9.500H1v-4h4.500z" fill="#7aa7dc" stroke="#204a87" /></svg>
      <svg width="14" height="5" className="ml-3"><rect x=".5" y=".5" width="13" height="4" fill="#7c8ea8" stroke="#5a6a82" /></svg>
      <div className="flex flex-1 justify-end gap-[8px]">
        {dockArrow("M1.500 1.500h15v3h-15zM9 4.500l6 6h-3.500V17h-5v-6.500H3z")}
        {dockArrow("M9 2.500l6 7h-3.500V15h-5V9.500H3z")}
        {dockArrow("M9 15.500l6-7h-3.500V2.500h-5v6H3z")}
        {dockArrow("M1.500 16.500h15v-3h-15zM9 13l6-6h-3.500V1h-5v6H3z")}
      </div>
    </div>
    <div className="mt-px flex h-[31px] items-center pl-1 text-[16.5px] text-[#808080]">
      <span className="w-[112px]">Blend mode:</span>
      <div className="flex h-full w-[264px] items-center border border-[#abadb3] pl-[3px]">
        <span className="flex-1">Normal</span>
        <div className="flex h-full w-[27px] items-center justify-center border border-[#bfbfbf] bg-[#ccc]"><Chev d="M1 3.500l5 5 5-5" c="#a0a0a0" w={1.2} /></div>
      </div>
    </div>
    <div className="mt-[4px] flex h-[33px] pl-1">
      <div className="w-[365px] border border-[#abadb3] bg-white p-px">
        <div className="flex h-full items-center justify-between border-r-2 border-b-2 border-black bg-[#b6c3ce] pl-[4px] text-[17px] tracking-[0.1px]">
          <span>Opacity (%)</span>
          <span className="tracking-[-0.1px]">100.0</span>
        </div>
      </div>
      <Spin h={32} />
    </div>
    <div className="mt-[7px] h-px bg-white" />
    <div className="mt-[3px] flex flex-col pr-[4px] pl-[2px]">
      <DockBar icon={<Ic s={14}><path d="M3 2h9l3 3v13H3z" fill="#fff" stroke="#444" strokeWidth="1.400" /><path d="M8 11h9M15 8l4 3-4 3z" fill="#222" stroke="#222" strokeWidth="1.400" /></Ic>} label="Export PNG Image (Shift+Ctrl+E)" />
      <DockBar icon={<div className="flex w-[14px] justify-center"><svg width="14" height="14" viewBox="0 0 14 14"><path d="M1 1h11v5l-4 7H1z" fill="#fff" stroke="#111" strokeWidth="1.500" /><path d="M13 2L8 8l-4 5 8-1 1-6z" fill="#222" /><path d="M11 3l2.500-2v3z" fill="#eab52c" /></svg></div>} label="Fill and Stroke (Shift+Ctrl+F)" />
      <DockBar icon={<LayersIc s={14} />} label="Layers (Shift+Ctrl+L)" on />
    </div>
  </div>
);

/* ---------- taskbar ---------- */

const InkLogo = ({ s }: { s: number }) => (
  <svg width={s} height={s} viewBox="0 0 32 32">
    <defs><linearGradient id="ink" x1="0" y1="0" x2="0" y2="1"><stop offset="0" stopColor="#4b4f57" /><stop offset="1" stopColor="#000" /></linearGradient></defs>
    <path d="M16 1c2 0 3 1 4 2l10 11c3 4-1 5-5 6 2 1 3 2 1 3-3 1-4 1-5 3s0 5-4 5c-5 0-3-5-6-6-4-1-5-2-3-4-4-1-9-2-6-7L12 3c1-1 2-2 4-2z" fill="url(#ink)" />
    <path d="M16 2.500c2 0 7 6 9 9l-3-1-2 2-4-2-4 3-2-2-3 0c2-3 7-9 9-9z" fill="#dfe4ea" />
    <path d="M5 15c6 3 14 3 21-1-4 5-14 6-21 1z" fill="#7f8da0" />
    <path d="M4 24h4M24 26h4M22 29h2" stroke="#000" strokeWidth="2" />
  </svg>
);

const Task = ({ children, on, under }: Kids & { on?: boolean; under?: boolean }) => (
  <div className="relative flex h-full w-[75.1px] shrink-0 items-center justify-center">
    {on && <div className="absolute inset-y-0 left-[1px] w-[73px] bg-[#434d54]" />}
    <div className="relative">{children}</div>
    {(on || under) && <div className={"absolute bottom-0 h-[3px] bg-[#76b9ed] " + (on ? "left-[1px] w-[73px]" : "left-[7px] w-[61px]")} />}
  </div>
);

const A = ({ children }: Kids) => <svg width="36" height="36" viewBox="0 0 36 36">{children}</svg>;

const apps: { k: React.ReactNode; on?: boolean; under?: boolean }[] = [
  { k: <A><circle cx="18" cy="19" r="15.500" fill="#ff9a1a" /><circle cx="18" cy="16" r="11" fill="#1373d6" /><path d="M22 1c5 4 12 9 11 20-1 8-8 13-15 13S3 29 2 21C1 14 4 8 5 4l3 5c2-1 5-1 7 1l-1 4-4 1c-1 3 2 7 6 7 3 0 5-2 5-3 5-3 6-8 1-18z" fill="#ff5a1f" /><path d="M22 1c7 5 12 11 11 20-1 7-5 11-10 13 5-6 6-12 2-17-1-6-3-8-3-16z" fill="#ffd21f" /><path d="M2 19c1 9 8 15 16 15-6-2-11-7-12-14z" fill="#ee2b55" /></A> },
  { k: <A><circle cx="18" cy="18" r="16.500" fill="#dd4b3e" /><path d="M18 18L3.700 9.700A16.500 16.500 0 0 0 18 34.500l7-12z" fill="#1aa15f" /><path d="M18 18h15.500l.5-7.500H18zM18 34.500A16.500 16.500 0 0 0 33 11H18l7 11z" fill="#ffcf48" /><path d="M3.700 9.700A16.500 16.500 0 0 1 33 11H18L11 21z" fill="#dd4b3e" /><circle cx="18" cy="18" r="7.600" fill="#fff" /><circle cx="18" cy="18" r="6.200" fill="#4a8cf5" /></A> },
  { k: <A><path d="M2 5h12l3 3H2z" fill="#f2b929" /><rect x="2" y="8" width="32" height="23" fill="#ffe391" /><path d="M8 32V20h21v12h-5v-7h-11v7z" fill="#39b5e8" /></A>, under: true },
  { k: <A><ellipse cx="18" cy="19" rx="16.500" ry="16.500" fill="#0c0e10" stroke="#5a6066" strokeWidth="1.500" /><path d="M8 20c0-6 6-8 10-6 5 0 6 5 4 9-2 5-6 9-9 11-4-4-5-9-5-14z" fill="#ff9b24" /><path d="M11 17c-1 5-1 9 1 14" stroke="#ffd98a" strokeWidth="2.500" fill="none" /><path d="M18 16c3 4 1 10-4 17 6-5 10-11 9-16z" fill="#e8601c" /><path d="M10 12c3-5 8-3 10-11l2 1c-1 4 0 5 2 6 6-1 9 5 5 9-1-3-3-4-5-4l-1 6-4-6-5 2v-3z" fill="#7db843" /></A> },
  { k: <A><path d="M2 18L24 2l10 2-3 14 3 14-10 2z" fill="#25282b" /><path d="M7 18L22 8v7l-6 3z M7 19l15 10v-7l-6-3z M24.500 8l6 4-6 3zM24.500 15.500L31 13v11l-6.500-2z M24.500 29l6-4-6-3z" fill="#fff" /></A> },
  { k: <InkLogo s={36} />, on: true },
  { k: <A><path d="M18 2l-1.500 2 6 5H7v4h8L1 24l4 3 7-5c1 6 6 9 12 9 7 0 11.500-5 11.500-11 0-5-2-7-5-10z" fill="#f5822a" /><circle cx="23.500" cy="20" r="7.800" fill="#fff" /><circle cx="23.500" cy="20" r="4.700" fill="#14579c" /></A> },
  { k: <A><path d="M5 17c4 1 6-2 9-4 3 1 5 1 8-2l7-4c2 8 1 17-6 22-6 2-15-1-18-7z" fill="#6f6a5e" /><circle cx="4" cy="18" r="3" fill="#222" /><path d="M1 17a3 3 0 0 1 3-2" stroke="#fff" strokeWidth="2" /><ellipse cx="11" cy="17" rx="3" ry="3.500" fill="#fff" /><ellipse cx="17" cy="16" rx="3.500" ry="4" fill="#fff" /><circle cx="11" cy="17" r="1.500" /><circle cx="17" cy="16" r="1.600" /><path d="M20 23l9 5" stroke="#e8862a" strokeWidth="2.500" /><path d="M29 28l4 3" stroke="#bbb" strokeWidth="3" /></A> },
  { k: <A><path d="M26 1l9 3v28l-9 4L1 28l25 3z" fill="#865fc5" /><path d="M3 11l4-1 14 14V7L7 20l-4-1z" fill="none" stroke="#865fc5" strokeWidth="3.200" /></A> },
  { k: <A><path d="M2 12l8-3v20l-8 1z" fill="#b9bdbf" /><rect x="2" y="14" width="3" height="2" fill="#3fd23f" /><path d="M9 4l26 2-3 22-24-3z" fill="#dfe4e8" /><path d="M12 7l20 1.500-2.500 16L11 22z" fill="#eef7fc" /><path d="M12 20l3-1 2-8 3 11 3-6 3 5 4-2" fill="none" stroke="#3d97cf" strokeWidth="1.300" /><ellipse cx="24" cy="31.500" rx="10" ry="3.500" fill="#d8d8d8" /></A> },
  { k: <A><rect x="1" y="0" width="34" height="36" fill="#050a1c" /><g fill="none" stroke="#16234a" strokeWidth="1.200">{[0, 45, 90, 135, 180, 225, 270, 315].map((a) => <path key={a} transform={`rotate(${a} 18 18)`} d="M16 12C14 7 17 3 22 3c-2 3-3 5-2 9" />)}</g><circle cx="18" cy="18" r="5.500" fill="#0a1026" stroke="#1c294e" /></A> },
  { k: <A><circle cx="18" cy="18" r="18" fill="#e8ebed" /><path d="M6.500 17v2M12 14v8M18 9v18M24 13v10M29.500 17v2" stroke="#25929c" strokeWidth="2.600" strokeLinecap="round" /></A> },
  { k: <A><path d="M3 1h20l6 6v28H3z" fill="#f1f1ef" /><path d="M4 2v32" stroke="#555" strokeWidth="2" strokeDasharray="1.500 1.500" /><path d="M8 7h15M8 11h12M8 15h9M8 19h9M8 23h8M8 27h10" stroke="#b9bcc0" strokeWidth="1.400" strokeDasharray="4 1" /><path d="M20 18c0-5 10-5 10 0v6h-7c-2 0-3 2-3 4-5 0-5-8 0-8h5" fill="#3b75a9" /><path d="M30 20c5 0 6 9 0 9h-3c0 3-8 4-8 0v-3c0-2 2-3 4-3h5c2 0 2-2 2-3z" fill="#ffd43b" /></A>, under: true },
];

const Taskbar = () => (
  <div className="flex h-[60px] shrink-0 items-center bg-[linear-gradient(90deg,#04202b_0%,#0a1b21_15%,#10181a_28%,#16242a_34%,#10181a_42%,#0a1820_60%,#04161f_78%,#111f23_86%,#04131b_100%)] text-white">
    <div className="flex w-[72px] justify-center">
      <svg width="25" height="25" viewBox="0 0 25 25" fill="#fff"><path d="M0 3.500L10.500 2v10H0zM12 1.800L25 0v12H12zM0 13h10.500v10L0 21.500zM12 13h13v12l-13-1.800z" /></svg>
    </div>
    <div className="flex w-[72px] justify-center"><div className="size-6 rounded-full border-[3px] border-white" /></div>
    <div className="flex w-[71px] justify-center">
      <svg width="24" height="24" viewBox="0 0 24 24" fill="none" stroke="#fff" strokeWidth="1.300"><path d="M.7 0v4.300h15.600V0M.7 24v-3.300h15.600V24M.7 7.500h15.600v9H.7zM22.500 0v4M22.500 11v13" /><path d="M22.500 6.500v3" strokeWidth="3" /></svg>
    </div>
    <div className="ml-1 flex h-full">
      {apps.map((a, i) => <Task key={i} on={a.on} under={a.under}>{a.k}</Task>)}
    </div>
    <div className="flex-1" />
    <div className="flex h-full items-center">
      <svg width="18" height="12" viewBox="0 0 18 12" fill="none" stroke="#fff" strokeWidth="1.400"><path d="M1 10l8-8 8 8" /></svg>
      <svg width="25" height="18" viewBox="0 0 25 18" className="ml-[14px]" fill="#fff"><path d="M4 16c-5-1-5-7 0-8 0-8 10-10 13-4-5-1-8 2-9 5-3 1-4 4-4 7z" /><path d="M8 17.500c-5 0-4-7 1-7 1-6 9-6 10-1 7 0 6 8 1 8z" /></svg>
      <svg width="26" height="22" viewBox="0 0 26 22" className="ml-[10px]" fill="none" stroke="#fff" strokeWidth="1.400"><rect x="6" y="5" width="17" height="13" /><rect x="8" y="7" width="13" height="9" fill="#fff" /><path d="M24.500 9v5" /><path d="M1 5h6v3c0 3-6 3-6 0zM2 2v3M6 2v3M4 10v7h2" fill="#0a181e" /></svg>
      <svg width="20" height="22" viewBox="0 0 20 22" className="ml-[14px]" fill="none" stroke="#bbb" strokeWidth="1.500"><path d="M1 21C1 10 8 2 19 1M6 21c0-8 5-13 13-14M11 21c0-5 3-8 8-9" /><circle cx="17" cy="19" r="1.600" fill="#fff" stroke="#fff" /></svg>
      <svg width="24" height="20" viewBox="0 0 24 20" className="ml-[14px]" fill="none" stroke="#fff" strokeWidth="1.300"><path d="M1 7h4l5-5v16l-5-5H1zM13 7c1 2 1 4 0 6M16 5c2 3 2 7 0 10" /><path d="M19 2c3 5 3 11 0 16" stroke="#777" /></svg>
      <svg width="22" height="20" viewBox="0 0 22 20" className="ml-[13px]" fill="#fff"><path d="M6 0l5 3.500L5.500 7 0 3.500zM16 0l6 3.500L16.500 7 11 3.500zM5.500 7l5.500 3.500L6 14 0 10.500zM16.500 7l5.500 3.500L16 14l-5-3.500zM11 12.500l5 3.500-5 4-5-4z" /></svg>
      <span className="ml-[17px] w-[34px] text-[16.5px] tracking-[-0.2px]">ENG</span>
      <div className="ml-[15px] w-[104px] text-center text-[17px] leading-[28px] tracking-[-0.1px]">
        <div>13:52</div>
        <div>01/07/2018</div>
      </div>
      <div className="relative ml-[22px] size-[40px]">
        <svg width="24" height="24" viewBox="0 0 24 24" className="absolute top-[8px] left-[1px]"><path d="M0 0h24v19h-8l-5 5v-5H0z" fill="#fff" /><path d="M4 5h16M4 9.500h16M4 14h11" stroke="#0a181e" strokeWidth="1.400" /></svg>
        <div className="absolute top-[19px] left-[12px] flex size-6 items-center justify-center rounded-full border border-[#888] bg-[#22292c] text-[14px] font-bold">8</div>
      </div>
      <div className="ml-[16px] h-full w-[2px] bg-[#6d767a]" />
      <div className="w-[6px]" />
    </div>
  </div>
);

/* ---------- page ---------- */

const menus: [string, number, string][] = [
  ["File", 0, "w-[39.5px]"], ["Edit", 0, "w-[44px]"], ["View", 0, "w-[51px]"], ["Layer", 0, "w-[55.5px]"], ["Object", 0, "w-[66px]"],
  ["Path", 0, "w-[49px]"], ["Text", 0, "w-[46px]"], ["Filters", 6, "w-[60px]"], ["Extensions", 3, "w-[96.5px]"], ["Help", 0, "w-[50px]"],
];

export default function App() {
  return (
    <div className="flex h-[1080px] w-[1920px] flex-col overflow-hidden bg-[#f0f0f0] font-['Open_Sans','Noto_Sans',sans-serif] text-black">
      <div className="flex h-9 shrink-0 items-center bg-white pl-[3px]">
        <InkLogo s={22} />
        <span className="ml-[6px] flex-1 text-[17px] tracking-[0.1px]">final.svg - Inkscape</span>
        <svg width="16" height="16" className="mr-[53px]"><path d="M0 8.500h15" stroke="#000" /></svg>
        <svg width="16" height="16" className="mr-[56px]" fill="none" stroke="#000"><path d="M.5 4.500h11v11H.5zM3.500 4.500v-3h12v11h-4" /></svg>
        <svg width="16" height="16" className="mr-[28px]"><path d="M.5 1l15 15M15.500 1l-15 15" stroke="#000" /></svg>
      </div>
      <div className="flex h-7 shrink-0 items-center bg-white pl-[8px] text-[17px] tracking-[-0.2px]">
        {menus.map(([m, u, w]) => (
          <div key={m} className={"shrink-0 whitespace-nowrap " + w}>
            {m.slice(0, u)}<span className="underline decoration-1 underline-offset-[3px]">{m[u]}</span>{m.slice(u + 1)}
          </div>
        ))}
      </div>
      <div className="flex h-[30px] shrink-0 items-center border-t border-[#d9d9d9] bg-white pl-[2px]">
        {snapBar.map((n, i) => <React.Fragment key={i}>{n}</React.Fragment>)}
      </div>
      <div className="flex h-[30px] shrink-0 items-center border-t border-[#d9d9d9] bg-white pl-[2px]">
        {cmdBar.map((n, i) => <React.Fragment key={i}>{n}</React.Fragment>)}
      </div>
      <div className="flex h-[48px] shrink-0 items-center border-t border-[#d9d9d9] bg-white pl-[2px] text-[15.5px] text-[#7d7d7d]">
        {ctlIcons.map((n, i) => <React.Fragment key={i}>{n}</React.Fragment>)}
        <span className="ml-[9px] w-[17px]">X:</span><Field w="w-[63px]">0.000</Field>
        <span className="ml-[10px] w-[17px]">Y:</span><Field w="w-[63px]">0.000</Field>
        <span className="ml-[10px] w-[23px]">W:</span><Field w="w-[63px]">0.000</Field>
        <div className="ml-[9px] w-[12px]"><Pad s={11} c="#d9cda8" /></div>
        <span className="ml-[16px] w-[18px]">H:</span><Field w="w-[63px]">0.000</Field>
        <div className="ml-px flex h-[28px] w-[59px] items-center border border-[#abadb3] bg-white text-black">
          <span className="flex-1 pl-[3px]">px</span>
          <div className="flex h-full w-6 items-center justify-center border border-[#adadad] bg-[#e1e1e1]"><Chev d="M1 3.500l5 5 5-5" w={1.2} /></div>
        </div>
        <div className="ml-[5px] h-7 w-px bg-[#a8a8a8]" />
        <div className="ml-[6px] flex">{[0, 1, 2, 3].map((k) => <Btn key={k} on tall><Aff k={k} /></Btn>)}</div>
      </div>

      <div className="flex h-[771px] shrink-0 border-t border-[#d0d0d0]">
        <div className="flex w-[34px] shrink-0 flex-col items-center bg-white pt-[2px]">
          {tools.map((t, i) => (
            <div key={i} className={"flex h-[30px] w-[30px] items-center justify-center border " + (i === 0 ? "border-[#99d1ff] bg-[#cce8ff]" : "border-transparent")}>{t}</div>
          ))}
        </div>
        <div className="flex w-[1465px] shrink-0 flex-col">
          <HRuler />
          <div className="flex h-[725px]"><VRuler /><Canvas /></div>
          <div className="relative flex h-[25px] items-center justify-between pr-[9px] pl-[29px]">
            <Chev d="M9 1L4 6l5 5" />
            <div className="absolute left-[713px] h-[25px] w-2 bg-[#cdcdcd]" />
            <Chev d="M3 1l5 5-5 5" />
          </div>
        </div>
        <div className="flex w-[31px] shrink-0 flex-col items-start">
          <svg width="12" height="14" viewBox="0 0 12 14" className="mt-[2px] ml-[5px]"><circle cx="5" cy="5" r="3.500" fill="#ddd" stroke="#888" /><path d="M7.500 8l3 4" stroke="#666" strokeWidth="1.500" /><path d="M4 3.500h1.500v4" stroke="#555" fill="none" /></svg>
          <div className="mt-[8px] ml-[6px]"><Chev d="M1 9l5-5 5 5" /></div>
          <div className="mt-[19px] h-2 w-6 bg-[#cdcdcd]" />
          <div className="flex-1" />
          <div className="mb-[14px] ml-[6px]"><Chev d="M1 3l5 5 5-5" /></div>
          <svg width="10" height="11" className="mb-[8px] ml-[6px]"><path d="M1 0l8 6-7 4z" fill="#a9b8b0" stroke="#777" strokeWidth=".8" /><path d="M2 2v4" stroke="#3a9a5a" strokeWidth="2" /><path d="M3 8.500h3" stroke="#c24" strokeWidth="1.500" /></svg>
        </div>
        <Dock />
      </div>

      <Palette />

      <div className="flex h-[15px] shrink-0 items-center">
        <div className="w-[26px] pl-[7px]"><Chev d="M8 1L3 6l5 5" c="#bdbdbd" w={2} /></div>
        <div className="h-[15px] w-[586px] bg-[#cdcdcd]" />
        <div className="flex-1" />
        <div className="mr-[16px]"><Chev d="M3 1l5 5-5 5" /></div>
      </div>
      <div className="flex h-[42px] shrink-0 items-center text-[14.5px]">
        <div className="w-[70px] pl-[2px] leading-[21px] tracking-[-0.3px]"><div>Fill:</div><div>Stroke:</div></div>
        <div className="w-[53px] pl-[2px] leading-[21px]"><div>N/A</div><div>N/A</div></div>
        <span className="w-[17px] text-[15px]">O:</span>
        <div className="h-[29px] w-[37px] border border-[#abadb3] pl-[3px] text-[15px] leading-[27px] text-[#8a8a8a]">0</div>
        <Spin />
        <div className="ml-[3px] h-full w-px bg-[#a0a0a0]" />
        <svg width="11" height="9" viewBox="0 0 11 9" className="ml-[6px]"><ellipse cx="5.500" cy="5" rx="4.500" ry="3" fill="#bbb" stroke="#777" /><circle cx="5.500" cy="4.500" r="2" fill="#555" /></svg>
        <div className="ml-[9px]"><Pad s={11} c="#ccc" /></div>
        <div className="ml-[3px] flex h-full w-[94px] items-center border border-[#abadb3] bg-white">
          <span className="flex-1 pl-[11px] text-[14.5px] tracking-[-0.1px]">(root)</span>
          <div className="flex h-full w-[27px] items-center justify-center border border-[#adadad] bg-[#e1e1e1]"><Chev d="M1 3.500l5 5 5-5" w={1.2} /></div>
        </div>
        <span className="ml-[2px] flex-1 text-[17px] tracking-[-0.01px] whitespace-nowrap"><b>Alt</b>: click to select under; scroll mouse-wheel to cycle-select; drag to move selected or select by touch</span>
        <div className="h-full w-px bg-[#a0a0a0]" />
        <div className="w-[99px] pl-[3px] leading-[21px]">
          <div className="flex"><span className="w-[12px]">X:</span><span className="font-['Liberation_Mono'] text-[16px] tracking-[0.2px] whitespace-pre text-[#222]">1108.17</span></div>
          <div className="flex"><span className="w-[12px]">Y:</span><span className="font-['Liberation_Mono'] text-[16px] tracking-[0.2px] whitespace-pre text-[#222]"> 447.82</span></div>
        </div>
        <span className="w-[14px] text-[15px]">Z:</span>
        <div className="h-[29px] w-[46px] overflow-hidden border border-[#abadb3] bg-white pl-[4px] text-[15.5px] leading-[27px]">2848%</div>
        <Spin dark />
        <div className="w-px" />
      </div>
      <Taskbar />
    </div>
  );
}
